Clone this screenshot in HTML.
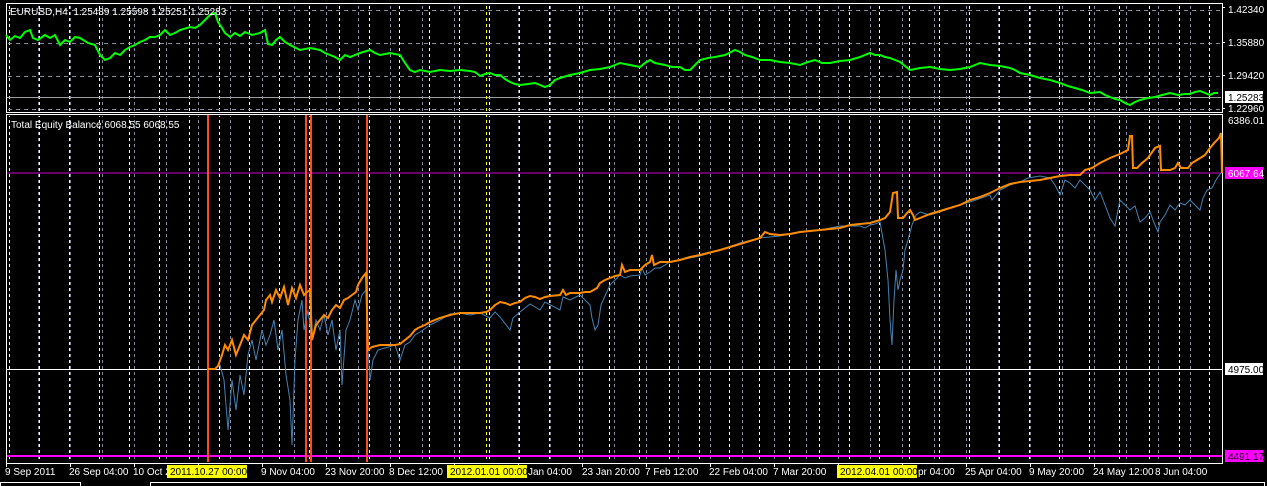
<!DOCTYPE html>
<html><head><meta charset="utf-8"><style>
html,body{margin:0;padding:0;background:#000;width:1267px;height:486px;overflow:hidden}
svg{display:block}
text{font-family:"Liberation Sans",sans-serif;font-size:10px;white-space:pre}
</style></head><body>
<svg width="1267" height="486" viewBox="0 0 1267 486" xmlns="http://www.w3.org/2000/svg" xml:space="preserve">
<defs>
<pattern id="vw" patternUnits="userSpaceOnUse" x="0" y="0" width="30" height="6"><rect x="9" y="0" width="1" height="3" fill="#fff"/></pattern>
<pattern id="vg" patternUnits="userSpaceOnUse" x="0" y="0" width="32" height="6"><rect x="6" y="0" width="1" height="3" fill="#7f8ea3"/></pattern>
<pattern id="hg" patternUnits="userSpaceOnUse" width="8" height="1"><rect width="4" height="1" fill="#8a8a9a"/></pattern>
<pattern id="vy" patternUnits="userSpaceOnUse" width="2" height="6"><rect width="1" height="3" fill="#ffff00"/></pattern>
</defs>
<rect width="1267" height="486" fill="#000"/>
<rect x="7" y="4" width="1214" height="108" fill="url(#vg)"/>
<rect x="7" y="4" width="1214" height="108" fill="url(#vw)"/>
<rect x="7" y="116" width="1214" height="346" fill="url(#vg)"/>
<rect x="7" y="116" width="1214" height="346" fill="url(#vw)"/>
<rect x="7" y="10" width="1214" height="1" fill="url(#hg)"/>
<rect x="7" y="43" width="1214" height="1" fill="url(#hg)"/>
<rect x="7" y="76" width="1214" height="1" fill="url(#hg)"/>
<rect x="7" y="109" width="1214" height="1" fill="url(#hg)"/>
<rect x="7" y="97" width="1214" height="1" fill="#a0a0a0"/>
<rect x="207" y="4" width="1" height="458" fill="url(#vy)"/>
<rect x="486" y="4" width="1" height="458" fill="url(#vy)"/>
<rect x="877" y="4" width="1" height="458" fill="url(#vy)"/>
<rect x="6.5" y="3.5" width="1216" height="109" fill="none" stroke="#fff"/>
<rect x="6.5" y="114.5" width="1216" height="349" fill="none" stroke="#fff"/>
<line x1="7" y1="369.5" x2="1222" y2="369.5" stroke="#fff"/>
<line x1="7" y1="456" x2="1222" y2="456" stroke="#ff00ff" stroke-width="2"/>
<line x1="7" y1="173" x2="1222" y2="173" stroke="#cc00cc"/>
<polyline fill="none" stroke="#00ff00" stroke-width="2" points="6,35 10,40 15,36 20,38 25,32 30,30 33,38 38,40 45,35 50,38 55,35 60,45 65,40 70,42 75,37 80,38 88,43 95,45 100,55 105,60 110,58 115,53 120,55 125,50 130,47 135,45 140,42 145,40 150,37 155,37 160,35 165,30 170,35 175,33 180,30 190,27 195,28 200,25 205,20 210,15 215,13 218,22 222,28 225,33 230,37 235,33 240,36 245,32 252,35 260,33 265,30 268,44 272,45 276,40 280,37 285,42 290,45 300,50 310,48 320,50 325,53 330,55 335,57 340,60 345,55 350,57 360,53 370,50 375,53 380,55 390,53 400,55 405,63 410,70 415,72 420,70 430,72 440,70 450,71 460,70 470,71 475,72 480,76 485,74 490,73 495,75 500,75 505,79 510,82 515,84 520,85 528,84 535,83 545,87 550,85 555,80 560,78 570,75 580,73 590,70 600,69 610,67 620,63 630,65 640,67 645,63 650,60 655,63 665,65 672,67 680,67 685,70 690,70 695,65 700,60 708,58 715,57 725,55 735,50 740,52 745,55 752,57 760,60 770,60 780,62 790,63 800,65 808,62 815,60 822,63 830,63 840,61 850,60 860,57 870,53 875,55 880,55 885,57 890,58 895,60 900,62 905,66 910,70 920,68 930,67 940,69 950,70 960,69 970,67 975,65 980,63 990,65 1000,66 1010,68 1015,70 1020,73 1030,75 1040,78 1050,80 1060,83 1068,86 1075,88 1082,90 1090,93 1100,92 1105,95 1110,97 1115,99 1120,100 1125,103 1130,105 1135,102 1140,100 1148,98 1155,97 1162,95 1170,93 1178,95 1185,94 1190,94 1195,92 1200,91 1205,93 1210,95 1214,93 1218,93"/>
<g stroke="#ff4a1a" stroke-width="2">
<line x1="208" y1="115" x2="208" y2="462"/>
<line x1="306" y1="115" x2="306" y2="462"/>
<line x1="311" y1="115" x2="311" y2="462"/>
<line x1="367" y1="115" x2="367" y2="462"/>
</g>
<polyline fill="none" stroke="#4682b4" stroke-width="1" points="208,369 215,369 220,365 224,380 228,430 232,380 236,410 240,375 244,395 248,355 252,340 256,360 262,330 266,345 270,335 274,320 278,350 282,330 286,375 290,400 292,445 295,360 298,320 302,300 304,330 308,310 312,340 316,320 320,330 324,315 328,335 332,320 336,350 340,330 342,385 346,330 350,320 355,300 358,310 362,295 366,290 368,350 370,380 373,360 378,350 385,348 395,345 400,360 405,345 410,342 415,335 420,332 430,325 440,320 450,314 460,313 470,315 480,313 490,318 495,312 500,317 510,330 513,318 520,312 530,304 540,310 545,302 560,310 563,297 570,300 580,295 585,300 590,305 592,318 595,330 598,325 601,305 605,296 610,285 613,282 620,275 625,278 630,276 640,275 642,268 645,275 650,272 655,268 660,268 670,262 680,260 700,256 720,250 740,243 760,238 780,236 800,232 820,230 840,226 850,226 860,226 865,228 870,225 875,224 880,222 885,250 888,280 890,320 892,345 894,300 896,270 898,290 900,280 903,270 905,250 908,240 912,225 916,215 920,212 930,215 940,212 950,208 970,202 990,195 992,200 1000,190 1010,185 1020,182 1028,178 1040,176 1050,178 1055,185 1060,195 1065,180 1070,183 1075,188 1080,180 1090,190 1095,200 1100,192 1105,205 1110,218 1115,226 1118,210 1120,200 1125,205 1130,210 1135,206 1140,222 1145,218 1150,212 1155,225 1158,232 1160,222 1165,215 1170,205 1175,210 1180,203 1185,205 1190,200 1195,205 1200,210 1203,198 1207,190 1212,188 1216,180 1221,173"/>
<polyline fill="none" stroke="#ff8c00" stroke-width="2" points="208,369 215,369 218,366 222,355 225,345 228,350 232,340 236,355 240,345 244,335 248,340 252,325 256,320 260,315 264,310 266,300 270,295 272,302 276,290 280,298 284,287 288,305 292,288 296,298 300,285 304,295 307,292 310,290 312,340 316,325 320,320 324,315 328,318 332,310 336,305 340,308 344,300 348,298 352,295 356,292 358,285 362,278 366,273 368,350 372,347 380,345 395,345 400,344 405,340 410,336 415,330 418,328 425,325 430,322 440,318 450,315 460,313 470,313 480,313 486,312 490,310 495,305 500,302 505,303 510,305 515,303 520,302 525,298 530,296 535,297 540,299 545,297 550,296 560,295 563,290 566,295 570,293 580,293 585,292 590,292 597,288 600,283 605,280 610,278 615,276 620,275 622,265 625,272 630,270 640,270 645,265 650,262 652,255 654,265 660,262 670,262 680,260 690,257 700,255 720,250 740,244 760,238 765,232 770,234 780,235 790,234 800,232 810,231 820,230 830,229 840,228 850,225 860,224 870,223 880,220 885,218 890,212 893,193 897,192 898,218 903,218 907,213 910,210 913,215 915,220 920,218 930,214 940,211 950,208 960,205 970,200 980,197 990,193 1000,188 1010,184 1020,182 1030,181 1040,180 1050,178 1060,176 1070,175 1080,175 1085,170 1092,168 1100,163 1110,158 1120,154 1128,150 1130,136 1132,136 1133,168 1137,168 1142,163 1148,158 1155,148 1160,146 1161,170 1170,170 1175,168 1178,163 1181,168 1188,168 1192,163 1197,160 1205,155 1210,148 1215,142 1219,138 1221,133 1222,173"/>
<text x="10" y="15" fill="#fff">EURUSD,H4  1.25489 1.25598 1.25251 1.25283</text>
<text x="11" y="128" fill="#fff">Total Equity Balance 6068.55 6068.55</text>
<g fill="#fff">
<rect x="1222" y="7" width="3" height="1"/><rect x="1222" y="42" width="3" height="1"/><rect x="1222" y="75" width="3" height="1"/><rect x="1222" y="108" width="3" height="1"/>
<text x="1228" y="13">1.42340</text>
<text x="1228" y="46">1.35880</text>
<text x="1228" y="79">1.29420</text>
<text x="1228" y="112">1.22960</text>
<text x="1228" y="124">6386.01</text>
</g>
<rect x="1225" y="91" width="38" height="12" fill="#fff"/>
<text x="1228" y="101" fill="#000">1.25283</text>
<rect x="1225" y="167" width="38" height="12" fill="#ff00ff"/>
<text x="1228" y="177" fill="#fff">6067.64</text>
<rect x="1225" y="363" width="38" height="12" fill="#fff"/>
<text x="1228" y="373" fill="#000">4975.00</text>
<rect x="1225" y="450" width="38" height="12" fill="#ff00ff"/>
<text x="1228" y="460" fill="#000">4491.17</text>
<line x1="6" y1="463.5" x2="1222" y2="463.5" stroke="#fff"/>
<g fill="#fff">
<rect x="6" y="463" width="1" height="4"/><rect x="70" y="463" width="1" height="4"/><rect x="134" y="463" width="1" height="4"/><rect x="198" y="463" width="1" height="4"/><rect x="262" y="463" width="1" height="4"/><rect x="326" y="463" width="1" height="4"/><rect x="390" y="463" width="1" height="4"/><rect x="454" y="463" width="1" height="4"/><rect x="518" y="463" width="1" height="4"/><rect x="582" y="463" width="1" height="4"/><rect x="646" y="463" width="1" height="4"/><rect x="710" y="463" width="1" height="4"/><rect x="774" y="463" width="1" height="4"/><rect x="838" y="463" width="1" height="4"/><rect x="902" y="463" width="1" height="4"/><rect x="966" y="463" width="1" height="4"/><rect x="1030" y="463" width="1" height="4"/><rect x="1094" y="463" width="1" height="4"/>
<text x="5" y="475">9 Sep 2011</text>
<text x="69" y="475">26 Sep 04:00</text>
<text x="133" y="475">10 Oct 2</text>
<text x="261" y="475">9 Nov 04:00</text>
<text x="325" y="475">23 Nov 20:00</text>
<text x="389" y="475">8 Dec 12:00</text>
<text x="528" y="475">Jan 04:00</text>
<text x="582" y="475">23 Jan 20:00</text>
<text x="645" y="475">7 Feb 12:00</text>
<text x="709" y="475">22 Feb 04:00</text>
<text x="773" y="475">7 Mar 20:00</text>
<text x="918" y="475">pr 04:00</text>
<text x="965" y="475">25 Apr 04:00</text>
<text x="1029" y="475">9 May 20:00</text>
<text x="1093" y="475">24 May 12:00</text>
<text x="1155" y="475">8 Jun 04:00</text>
</g>
<rect x="167" y="465" width="80" height="13" fill="#ffff00"/>
<text x="170" y="475" fill="#000">2011.10.27 00:00</text>
<rect x="447" y="465" width="80" height="13" fill="#ffff00"/>
<text x="450" y="475" fill="#000">2012.01.01 00:00</text>
<rect x="837" y="465" width="80" height="13" fill="#ffff00"/>
<text x="840" y="475" fill="#000">2012.04.01 00:00</text>
<rect x="0.5" y="482.5" width="80" height="5" fill="none" stroke="#fff"/>
<rect x="150.5" y="482.5" width="1114" height="5" fill="none" stroke="#fff"/>
</svg>
</body></html>
